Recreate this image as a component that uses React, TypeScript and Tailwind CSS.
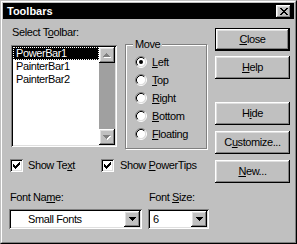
import React from "react";

// win95 bevels
const raised =
  "shadow-[inset_-1px_-1px_0_#000,inset_1px_1px_0_#fff,inset_-2px_-2px_0_#808080,inset_2px_2px_0_#dfdfdf]";
const sunken =
  "shadow-[inset_1px_1px_0_#808080,inset_-1px_-1px_0_#fff,inset_2px_2px_0_#000,inset_-2px_-2px_0_#dfdfdf]";

const ARROW_UP = ["...#...", "..###..", ".#####.", "#######"];
const ARROW_DOWN = ["#######", ".#####.", "..###..", "...#..."];
const CROSS = ["##....##", ".##..##.", "..####..", "...##...", "..####..", ".##..##.", "##....##"];
const CHECK = ["......#", ".....##", "#...###", "##.###.", "#####..", ".###...", "..#...."];

function Pix({ rows, color, shadow }: { rows: string[]; color: string; shadow?: string }) {
  const w = rows[0].length + (shadow ? 1 : 0);
  const h = rows.length + (shadow ? 1 : 0);
  const cells: { x: number; y: number }[] = [];
  rows.forEach((r, y) => [...r].forEach((c, x) => c === "#" && cells.push({ x, y })));
  return (
    <svg width={w} height={h} viewBox={`0 0 ${w} ${h}`} shapeRendering="crispEdges" className="block">
      {shadow && cells.map((c) => <rect key={`s${c.x}-${c.y}`} x={c.x + 1} y={c.y + 1} width={1} height={1} fill={shadow} />)}
      {cells.map((c) => <rect key={`${c.x}-${c.y}`} x={c.x} y={c.y} width={1} height={1} fill={color} />)}
    </svg>
  );
}

function U({ children }: { children: React.ReactNode }) {
  return <span className="underline decoration-1 underline-offset-[1px]">{children}</span>;
}

function Button({ children, isDefault, className }: { children: React.ReactNode; isDefault?: boolean; className?: string }) {
  return (
    <div
      className={`flex h-[23px] w-[75px] items-center justify-center bg-[#c0c0c0] ${className ?? ""} ${
        isDefault ? "border border-black" : ""
      }`}
    >
      <div className={`flex h-full w-full items-center justify-center ${raised}`}>{children}</div>
    </div>
  );
}

function Radio({ checked }: { checked?: boolean }) {
  return (
    <svg width="12" height="12" viewBox="0 0 12 12" className="block shrink-0">
      <circle cx="6" cy="6" r="4.5" fill="#fff" />
      <path d="M2.11 9.89 A5.5 5.5 0 0 1 9.89 2.11" fill="none" stroke="#808080" />
      <path d="M9.89 2.11 A5.5 5.5 0 0 1 2.11 9.89" fill="none" stroke="#fff" />
      <path d="M2.82 9.18 A4.5 4.5 0 0 1 9.18 2.82" fill="none" stroke="#000" />
      <path d="M9.18 2.82 A4.5 4.5 0 0 1 2.82 9.18" fill="none" stroke="#dfdfdf" />
      {checked && <circle cx="6" cy="6" r="2" fill="#000" />}
    </svg>
  );
}

function Checkbox() {
  return (
    <div className={`flex h-[13px] w-[13px] shrink-0 items-center justify-center bg-white ${sunken}`}>
      <Pix rows={CHECK} color="#000" />
    </div>
  );
}

function Combo({ value, width, indent }: { value: string; width: string; indent: string }) {
  return (
    <div className={`flex h-[20px] items-center bg-white p-[2px] ${width} ${sunken}`}>
      <div className={`flex-1 ${indent}`}>{value}</div>
      <div className={`flex h-[16px] w-[16px] items-center justify-center bg-[#c0c0c0] ${raised}`}>
        <Pix rows={ARROW_DOWN} color="#000" />
      </div>
    </div>
  );
}

const moves = [
  { pre: "", key: "L", rest: "eft", checked: true },
  { pre: "", key: "T", rest: "op" },
  { pre: "", key: "R", rest: "ight" },
  { pre: "", key: "B", rest: "ottom" },
  { pre: "", key: "F", rest: "loating" },
];

const toolbars = ["PowerBar1", "PainterBar1", "PainterBar2"];

export default function App() {
  return (
    <div className="h-[244px] w-[297px] border border-t-[#c0c0c0] border-l-[#c0c0c0] border-r-black border-b-black bg-[#c0c0c0] font-['Liberation_Sans',Arial,sans-serif] text-[11px] leading-[13px] tracking-[-0.4px] text-black">
      <div className="flex h-full w-full flex-col border border-t-white border-l-white border-r-[#808080] border-b-[#808080] p-[1px]">
        {/* title bar */}
        <div className="flex h-[16px] items-center justify-between bg-black pl-[4px] pr-[3px]">
          <span className="text-[11px] font-bold tracking-normal text-white">Toolbars</span>
          <div className={`flex h-[13px] w-[15px] items-center justify-center bg-[#c0c0c0] ${raised}`}>
            <Pix rows={CROSS} color="#000" />
          </div>
        </div>

        <div className="flex flex-1 pl-[7px] pr-[4px]">
          {/* left side */}
          <div className="flex flex-col">
            <div className="ml-[2px] mt-[7px]">
              Select T<U>o</U>olbar:
            </div>
            <div className="flex items-start">
              <div className={`ml-[1px] mt-[6px] flex h-[102px] w-[106px] bg-white p-[2px] ${sunken}`}>
                <div className="flex-1">
                  {toolbars.map((t, i) => (
                    <div
                      key={t}
                      className={`h-[13px] pl-[2px] ${
                        i === 0 ? "border border-dotted border-white bg-black text-white" : "border border-transparent"
                      }`}
                    >
                      <span className="relative -top-[1px]">{t}</span>
                    </div>
                  ))}
                </div>
                <div className="flex w-[16px] flex-col">
                  <div className={`flex h-[16px] items-center justify-center bg-[#c0c0c0] ${raised}`}>
                    <Pix rows={ARROW_UP} color="#808080" shadow="#fff" />
                  </div>
                  <div className="flex-1 bg-[#a0a0a0]" />
                  <div className={`flex h-[16px] items-center justify-center bg-[#c0c0c0] ${raised}`}>
                    <Pix rows={ARROW_DOWN} color="#808080" shadow="#fff" />
                  </div>
                </div>
              </div>

              <div className="ml-[8px] mt-[5px] h-[105px] w-[82px] border border-[#808080] shadow-[1px_1px_0_#fff,inset_1px_1px_0_#fff]">
                <div className="-mt-[7px] ml-[7px] w-fit bg-[#c0c0c0] px-[2px]">Move</div>
                <div className="mt-[2px] pl-[9px]">
                  {moves.map((m) => (
                    <div key={m.key} className="flex h-[18px] items-center gap-[5px]">
                      <Radio checked={m.checked} />
                      <span>
                        <U>{m.key}</U>
                        {m.rest}
                      </span>
                    </div>
                  ))}
                </div>
              </div>
            </div>

            <div className="mt-[10px] flex h-[13px] items-center">
              <div className="flex w-[91px] items-center gap-[5px]">
                <Checkbox />
                <span>
                  Show Te<U>x</U>t
                </span>
              </div>
              <div className="flex items-center gap-[6px]">
                <Checkbox />
                <span>
                  Show <U>P</U>owerTips
                </span>
              </div>
            </div>

            <div className="mt-[19px] flex">
              <div className="w-[139px]">
                Font Na<U>m</U>e:
              </div>
              <div>
                Font <U>S</U>ize:
              </div>
            </div>

            <div className="-ml-[1px] mt-[5px] flex gap-[6px]">
              <Combo value="Small Fonts" width="w-[133px]" indent="pl-[17px]" />
              <Combo value="6" width="w-[61px]" indent="pl-[3px]" />
            </div>
          </div>

          {/* buttons */}
          <div className="ml-auto mt-[9px] flex flex-col">
            <Button isDefault>
              <U>C</U>lose
            </Button>
            <Button className="mt-[5px]">
              <U>H</U>elp
            </Button>
            <Button className="mt-[23px]">
              H<U>i</U>de
            </Button>
            <Button className="mt-[6px]">
              C<U>u</U>stomize...
            </Button>
            <Button className="mt-[6px]">
              <U>N</U>ew...
            </Button>
          </div>
        </div>
      </div>
    </div>
  );
}
